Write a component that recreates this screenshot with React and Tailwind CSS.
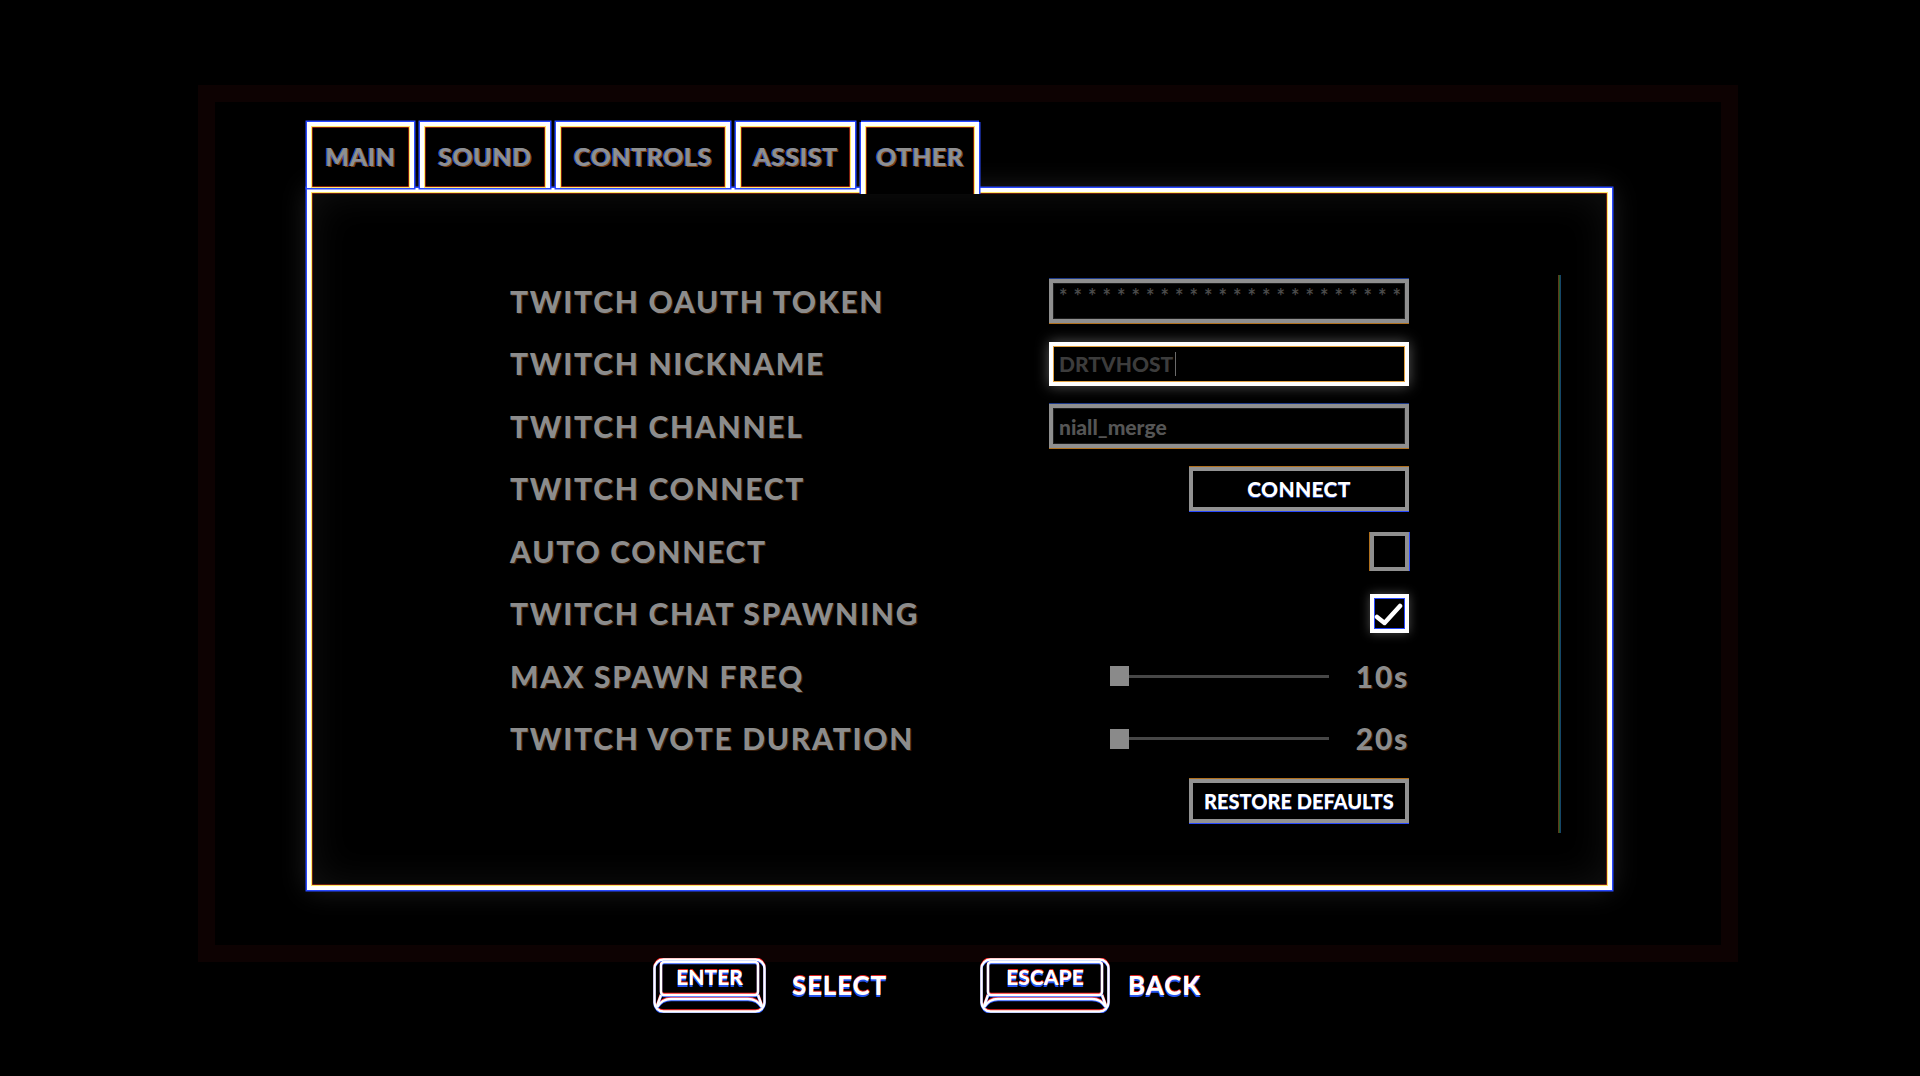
import React from 'react';

// CRT-ish chromatic edges: blue outside, yellow/red inside the white line
const GLOW_BOX =
  'shadow-[0_0_0_1.5px_#2848ff,inset_0_0_0_1px_#ffe866,inset_0_0_0_1.5px_rgba(255,60,30,0.8),0_0_26px_rgba(255,255,255,0.13),inset_0_0_40px_rgba(255,255,255,0.07)]';
const GLOW_TAB_ACTIVE =
  'shadow-[-1.5px_0_0_0_#2848ff,1.5px_0_0_0_#2848ff,0_-1.5px_0_0_#2848ff,inset_1px_0_0_0_#ffe866,inset_-1px_0_0_0_#ffe866,inset_0_1px_0_0_#ffe866,inset_1.5px_0_0_0_#ff3a1c,inset_-1.5px_0_0_0_#ff3a1c,inset_0_1.5px_0_0_#ff3a1c]';

const tabs = [
  { name: 'MAIN', w: 'w-[107px]' },
  { name: 'SOUND', w: 'w-[130px]' },
  { name: 'CONTROLS', w: 'w-[174px]' },
  { name: 'ASSIST', w: 'w-[119px]' },
  { name: 'OTHER', w: 'w-[118px]', active: true },
];

function Tab({ name, w, active }) {
  return (
    <div
      className={
        active
          ? `${w} relative z-10 h-[72px] -mb-[6px] pb-[6px] bg-black border-4 border-b-0 border-white flex items-center justify-center ${GLOW_TAB_ACTIVE}`
          : `${w} h-[66px] bg-black border-4 border-b-0 border-white flex items-center justify-center shadow-[0_0_0_1.5px_#2848ff,inset_0_0_0_1px_#ffe866,inset_0_0_0_1.5px_#ff3a1c]`
      }
    >
      <span className="text-[25px] font-black tracking-[0.5px] text-[#8f8f8f] [text-shadow:-1px_0_0_rgba(60,110,255,0.8),1px_1px_0_rgba(230,120,40,0.55)]">
        {name}
      </span>
    </div>
  );
}

function Label({ children }) {
  return (
    <span className="text-[30px] font-black tracking-[1.7px] text-[#8c8c8c] [text-shadow:1px_1px_0_rgba(170,90,30,0.35)]">
      {children}
    </span>
  );
}

function TextBox({ focused, children }) {
  return (
    <div
      className={
        focused
          ? 'w-[360px] h-[44px] border-4 border-white bg-black px-[6px] flex items-center overflow-hidden shadow-[0_0_14px_rgba(255,255,255,0.35),inset_0_0_0_1px_#e0a040]'
          : 'w-[360px] h-[44px] border-4 border-[#8f8f8f] bg-black px-[6px] flex items-center overflow-hidden shadow-[0_-1px_0_0_#1d3a8a,0_1px_0_0_#b0701e,inset_0_0_0_1px_#1d1d1d]'
      }
    >
      {children}
    </div>
  );
}

function Button({ children, tight }) {
  return (
    <div className="w-[220px] h-[44px] border-4 border-[#929292] bg-black flex items-center justify-center shadow-[0_1px_0_0_#2848ff,0_-1px_0_0_#b0701e]">
      <span
        className={
          tight
            ? 'text-[20px] font-black text-white tracking-[0px] [text-shadow:0_1px_0_rgba(60,110,255,0.7)]'
            : 'text-[21px] font-black text-white tracking-[0.3px] [text-shadow:0_1px_0_rgba(60,110,255,0.7)]'
        }
      >
        {children}
      </span>
    </div>
  );
}

function Checkbox({ checked }) {
  return (
    <div
      className={
        checked
          ? 'w-[39px] h-[39px] border-4 border-white bg-black shadow-[0_0_10px_rgba(255,255,255,0.3),inset_0_0_0_1px_#2848ff]'
          : 'w-[39px] h-[39px] border-4 border-[#8f8f8f] bg-black shadow-[-1px_0_0_0_#b0701e,1px_0_0_0_#2848ff]'
      }
    >
      {checked && (
        <svg viewBox="0 0 31 31" className="w-full h-full">
          <path d="M3 19 L10.5 25 L26 8" fill="none" stroke="#ffffff" strokeWidth="4.5" strokeLinecap="round" strokeLinejoin="round" />
        </svg>
      )}
    </div>
  );
}

function Slider({ value }) {
  return (
    <div className="flex items-center">
      <div className="w-[19px] h-[20px] bg-[#8a8a8a]" />
      <div className="w-[200px] h-[3px] bg-[#474747]" />
      <div className="w-[80px] text-right">
        <Label>{value}</Label>
      </div>
    </div>
  );
}

function Key({ label, w }) {
  const W = w === 'w-[113px]' ? 113 : 130;
  const shape = (
    <>
      <rect x="1.5" y="1.5" width={W - 3} height="52" rx="9" />
      <rect x="8" y="4" width={W - 16} height="33" rx="3" />
      <path d={`M4 49 Q9 41 18 41 L${W - 18} 41 Q${W - 9} 41 ${W - 4} 49`} />
      <path d={`M8 37 L4 48 M${W - 8} 37 L${W - 4} 48`} />
    </>
  );
  return (
    <div className={`relative h-[55px] ${w}`}>
      <svg viewBox={`0 0 ${W} 55`} className="absolute inset-0 w-full h-full" fill="none" strokeWidth="2.4">
        <g stroke="#ff2a2a" transform="translate(0 -1)">{shape}</g>
        <g stroke="#2f5cff" transform="translate(0 1)">{shape}</g>
        <g stroke="#ffffff">{shape}</g>
      </svg>
      <div className="relative h-[38px] flex items-center justify-center">
        <span className="text-[21px] font-black text-white [text-shadow:0_-1.5px_0_rgba(255,40,40,0.9),0_1.5px_0_rgba(40,90,255,0.95)]">
          {label}
        </span>
      </div>
    </div>
  );
}

function Hint({ children }) {
  return (
    <span className="text-[26px] font-black text-white tracking-[0.8px] [text-shadow:0_-1.5px_0_rgba(255,40,40,0.9),0_1.5px_0_rgba(40,90,255,0.95)]">
      {children}
    </span>
  );
}

export default function App() {
  const rows = [
    {
      label: 'TWITCH OAUTH TOKEN',
      control: (
        <TextBox>
          <span className="text-[20px] font-bold text-[#4a4a4a] tracking-[6px] whitespace-nowrap -mt-[10px]">
            {'*'.repeat(24)}
          </span>
        </TextBox>
      ),
    },
    {
      label: 'TWITCH NICKNAME',
      control: (
        <TextBox focused>
          <span className="text-[21px] font-black text-[#3c3c3c] whitespace-nowrap">DRTVHOST</span>
          <span className="w-px h-[24px] bg-[#6a6a6a] ml-[2px]" />
        </TextBox>
      ),
    },
    {
      label: 'TWITCH CHANNEL',
      control: (
        <TextBox>
          <span className="text-[21px] font-black text-[#555555] whitespace-nowrap">niall_merge</span>
        </TextBox>
      ),
    },
    { label: 'TWITCH CONNECT', control: <Button>CONNECT</Button> },
    { label: 'AUTO CONNECT', control: <Checkbox /> },
    { label: 'TWITCH CHAT SPAWNING', control: <Checkbox checked /> },
    { label: 'MAX SPAWN FREQ', control: <Slider value="10s" /> },
    { label: 'TWITCH VOTE DURATION', control: <Slider value="20s" /> },
    { label: '', control: <Button tight>RESTORE DEFAULTS</Button> },
  ];

  return (
    <div className="relative w-[1920px] h-[1076px] bg-black overflow-hidden font-['Lato','Liberation_Sans',sans-serif]">
      {/* faint outer bezel */}
      <div className="absolute left-[198px] top-[85px] w-[1540px] h-[877px] border-[17px] border-[#0d0202] pointer-events-none" />

      <div className="relative pt-[122px] pl-[307px]">
        <div className="flex items-start gap-[6px] h-[66px]">
          {tabs.map((t) => (
            <Tab key={t.name} {...t} />
          ))}
        </div>

        <div className={`w-[1305px] h-[702px] border-4 border-white bg-black flex items-start ${GLOW_BOX}`}>
          <div className="pl-[199px] pt-[78px]">
            <div className="w-[899px] flex flex-col">
              {rows.map((r, i) => (
                <div key={i} className="h-[62.5px] flex items-center justify-between">
                  <Label>{r.label}</Label>
                  {r.control}
                </div>
              ))}
            </div>
          </div>
          <div className="mt-[83px] ml-[149px] w-[3px] h-[558px] bg-linear-to-r from-[#6a1812] via-[#26602a] to-[#183280]" />
        </div>
      </div>

      <div className="relative mt-[68px] ml-[653px] flex items-center">
        <Key label="ENTER" w="w-[113px]" />
        <div className="ml-[26px]">
          <Hint>SELECT</Hint>
        </div>
        <div className="ml-[93px]">
          <Key label="ESCAPE" w="w-[130px]" />
        </div>
        <div className="ml-[18px]">
          <Hint>BACK</Hint>
        </div>
      </div>
    </div>
  );
}
